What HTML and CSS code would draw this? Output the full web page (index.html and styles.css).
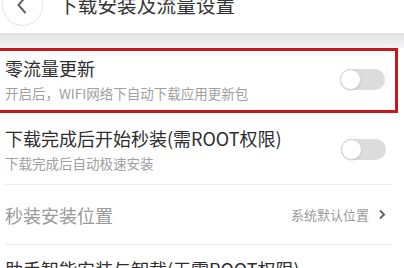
FILE: index.html
```html
<!DOCTYPE html>
<html lang="zh-CN">
<head>
<meta charset="utf-8">
<link rel="stylesheet" href="styles.css">
</head>
<body>
<div class="page">
  <header class="topbar">
    <div class="back">
      <svg width="12" height="18" viewBox="0 0 12 18"><path d="M9 1.5 L2.5 9 L9 16.5" fill="none" stroke="#666" stroke-width="2" stroke-linecap="round" stroke-linejoin="round"/></svg>
    </div>
    <div class="title">下载安装及流量设置</div>
  </header>
  <div class="band"></div>
  <div class="row boxed">
    <div class="texts">
      <div class="main">零流量更新</div>
      <div class="sub">开启后，WIFI网络下自动下载应用更新包</div>
    </div>
    <div class="toggle"><span class="knob"></span></div>
  </div>
  <div class="row r2">
    <div class="texts">
      <div class="main">下载完成后开始秒装(需ROOT权限)</div>
      <div class="sub">下载完成后自动极速安装</div>
    </div>
    <div class="toggle"><span class="knob"></span></div>
  </div>
  <div class="row r3">
    <div class="main muted">秒装安装位置</div>
    <div class="value">系统默认位置
      <svg class="chev" width="8" height="11" viewBox="0 0 8 11"><path d="M2 1.5 L6 5.5 L2 9.5" fill="none" stroke="#666" stroke-width="2"/></svg>
    </div>
  </div>
  <div class="row r4">
    <div class="texts">
      <div class="main">助手智能安装与卸载(无需ROOT权限)</div>
    </div>
  </div>
</div>
</body>
</html>
```
FILE: styles.css
```css
* { box-sizing: border-box; margin: 0; padding: 0; }
html, body { width: 404px; height: 268px; overflow: hidden; background: #fff; }
body { font-family: "Noto Sans CJK SC", "Noto Sans", sans-serif; color: #333; }
.page { width: 404px; }
.topbar {
  height: 56px;
  margin-top: -23px;
  display: flex;
  align-items: center;
  padding-left: 2px;
}
.back {
  width: 41px; height: 41px;
  border: 1px solid #e2e2e2;
  border-radius: 50%;
  display: flex; align-items: center; justify-content: center;
  padding-right: 2px;
}
.title {
  margin-left: 15px;
  font-size: 19.5px;
  line-height: 24px;
  color: #333;
  letter-spacing: 0.2px;
}
.band {
  height: 15px;
  background: linear-gradient(#e1e1e3, #eeeef0 70%, #f6f6f8);
}
.row {
  display: flex;
  align-items: center;
  justify-content: space-between;
}
.texts { display: flex; flex-direction: column; }
.main { font-size: 18px; line-height: 24px; color: #2e2e2e; }
.sub { font-size: 13.5px; line-height: 18px; color: #a0a0a0; margin-top: 4px; }
.boxed {
  margin-left: -3px;
  width: 401px;
  border: 3px solid #c8161d;
  padding: 5px 10px 8px 5px;
}
.r2, .r3, .r4 {
  margin: 0 12px 0 5px;
  padding-right: 6px;
  border-bottom: 1px solid #eeeeee;
}
.r2 { padding-top: 13px; padding-bottom: 12px; }
.r3 { height: 60px; }
.r4 { padding-top: 12px; border-bottom: none; }
.muted { color: #9a9a9a; }
.toggle {
  width: 45px; height: 21px;
  border-radius: 11px;
  background: #dcdcdc;
  position: relative;
  flex: none;
}
.knob {
  position: absolute;
  left: 0; top: 0;
  width: 21px; height: 21px;
  border-radius: 50%;
  background: #fff;
  border: 1px solid #d0d0d0;
  box-shadow: 0 1px 1px rgba(0,0,0,0.08);
}
.value {
  font-size: 13px;
  color: #9a9a9a;
  display: flex; align-items: center;
}
.chev { margin-left: 9px; }
```
